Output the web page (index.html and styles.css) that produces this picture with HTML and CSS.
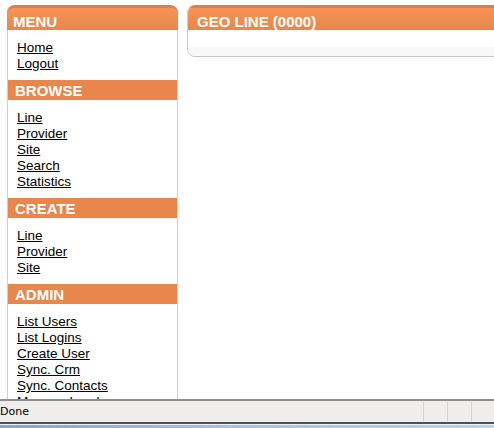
FILE: index.html
```html
<!DOCTYPE html>
<html>
<head>
<meta charset="utf-8">
<title>Geo Line</title>
<link rel="stylesheet" href="styles.css">
</head>
<body>
<div class="page">
  <div class="sidebar">
    <div class="box-head">MENU</div>
    <ul class="links">
      <li><a href="#">Home</a></li>
      <li><a href="#">Logout</a></li>
    </ul>
    <div class="sec-head">BROWSE</div>
    <ul class="links">
      <li><a href="#">Line</a></li>
      <li><a href="#">Provider</a></li>
      <li><a href="#">Site</a></li>
      <li><a href="#">Search</a></li>
      <li><a href="#">Statistics</a></li>
    </ul>
    <div class="sec-head">CREATE</div>
    <ul class="links">
      <li><a href="#">Line</a></li>
      <li><a href="#">Provider</a></li>
      <li><a href="#">Site</a></li>
    </ul>
    <div class="sec-head">ADMIN</div>
    <ul class="links">
      <li><a href="#">List Users</a></li>
      <li><a href="#">List Logins</a></li>
      <li><a href="#">Create User</a></li>
      <li><a href="#">Sync. Crm</a></li>
      <li><a href="#">Sync. Contacts</a></li>
      <li><a href="#">Manage Loads</a></li>
    </ul>
  </div>
  <div class="main">
    <div class="box-head">GEO LINE (0000)</div>
    <div class="main-body"></div>
    <div class="main-foot"></div>
  </div>
</div>
<div class="status">
  <div class="status-text">Done</div>
  <div class="status-cell"></div>
  <div class="status-cell"></div>
  <div class="status-cell last"></div>
</div>
<div class="taskbar"></div>
</body>
</html>
```
FILE: styles.css
```css
html, body {
  margin: 0;
  padding: 0;
}
body {
  width: 494px;
  height: 428px;
  overflow: hidden;
  display: flex;
  flex-direction: column;
  background: #ffffff;
  font-family: "Liberation Sans", Arial, sans-serif;
}
.page {
  height: 394px;
  flex: none;
  padding: 5px 0 0 7px;
  display: flex;
  align-items: flex-start;
  gap: 9px;
  overflow: hidden;
}
.sidebar {
  width: 171px;
  flex: none;
  box-sizing: border-box;
  border-left: 1px solid #cfcfcf;
  border-right: 1px solid #cfcfcf;
  border-top-left-radius: 8px;
  border-top-right-radius: 8px;
  min-height: 420px;
}
.box-head {
  height: 25px;
  box-sizing: border-box;
  margin: 0 -1px;
  padding: 5px 0 0 6px;
  border-top: 3px solid #e37d43;
  border-top-left-radius: 8px;
  border-top-right-radius: 8px;
  background: linear-gradient(#f69457, #e9864b);
  color: #ffffff;
  font-weight: bold;
  font-size: 15px;
  line-height: 17px;
}
.sec-head {
  height: 20px;
  box-sizing: border-box;
  padding: 2px 0 0 7px;
  background: #e9864b;
  color: #ffffff;
  font-weight: bold;
  font-size: 15px;
  line-height: 17px;
}
.links {
  list-style: none;
  margin: 0;
  padding: 10px 0 8px 9px;
}
.links li {
  font-size: 13.5px;
  line-height: 16px;
}
.links a {
  color: #000000;
  text-decoration: underline;
}
.main {
  flex: 1;
  margin-right: -12px;
  border-left: 1px solid #cfcfcf;
  border-bottom: 1px solid #c8c8c8;
  border-radius: 8px;
  overflow: hidden;
}
.main .box-head {
  margin: 0;
  padding-left: 9px;
  border-radius: 0;
}
.main-body {
  height: 17px;
  background: #ffffff;
}
.main-foot {
  height: 9px;
  background: #f8f8f8;
}
.status {
  height: 21px;
  flex: none;
  border-top: 2px solid #8e8e8e;
  border-bottom: 2px solid #505050;
  background: #f0eeec;
  display: flex;
  font-family: "DejaVu Sans", "Noto Sans", sans-serif;
  font-size: 11px;
}
.status-text {
  flex: 1;
  line-height: 21px;
  color: #000000;
}
.status-cell {
  width: 23px;
  border-left: 1px solid #d6d2ce;
  margin: 1px 0;
}
.status-cell.last {
  width: 22px;
}
.taskbar {
  flex: 1;
  border-top: 1px solid #eef2f6;
  background: linear-gradient(90deg, #7fa8d4 0%, #9ec3e9 45%, #b3d4f3 100%);
}
```
